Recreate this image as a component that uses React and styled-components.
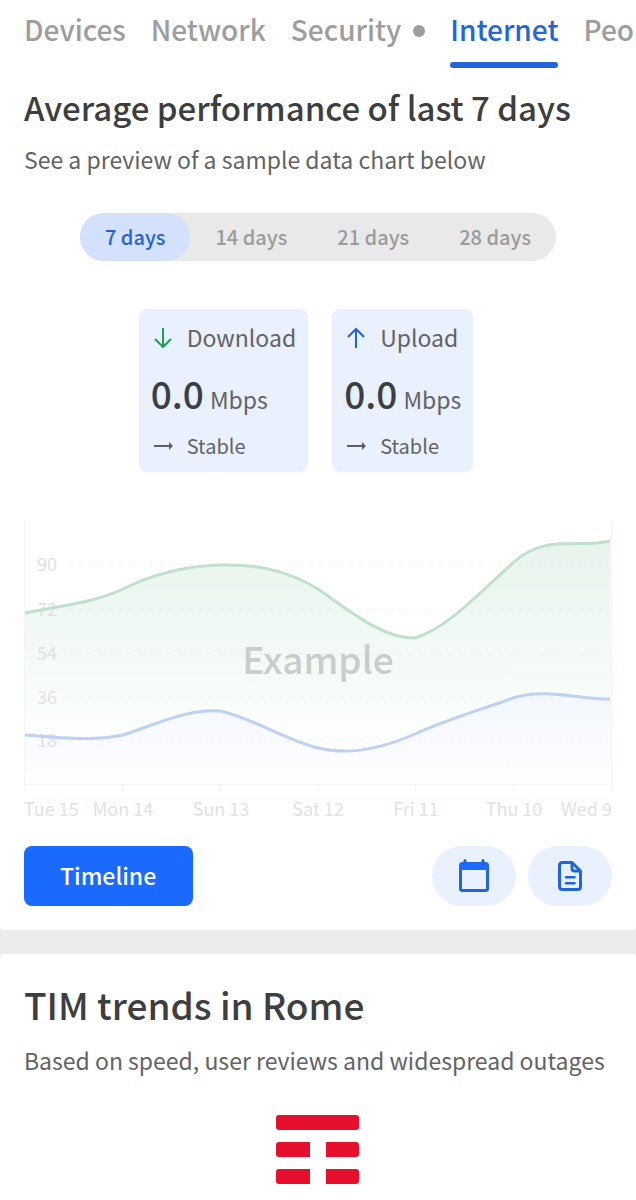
import React, { useState } from 'react';
import styled, { createGlobalStyle } from 'styled-components';

const GlobalStyle = createGlobalStyle`
  * {
    box-sizing: border-box;
  }

  body {
    margin: 0;
    background: #ececec;
    color: #3d3e40;
    font-family: "Noto Sans CJK SC", "Noto Sans", sans-serif;
  }

  button {
    font-family: inherit;
    border: none;
    cursor: pointer;
  }
`;

const Page = styled.div`
  display: flex;
  flex-direction: column;
  gap: 24px;
  overflow: hidden;
`;

const Card = styled.section`
  background: white;
  padding: 0 24px 24px;
  border-radius: ${(p) => (p.$first ? '0 0 4px 4px' : '4px 4px 0 0')};
`;

const Tabs = styled.nav`
  display: flex;
  gap: 25px;
  margin-right: -24px;
  overflow: hidden;
`;

const Tab = styled.a`
  display: flex;
  flex: none;
  flex-direction: column;
  color: ${(p) => (p.$active ? '#2264dc' : '#9d9d9d')};
  font-size: 28px;
  font-weight: 500;
  text-decoration: none;

  &::after {
    content: "";
    height: 6px;
    border-radius: 3px;
    background: ${(p) => (p.$active ? '#2264dc' : 'transparent')};
  }
`;

const TabLabel = styled.span`
  display: flex;
  align-items: center;
  gap: 12px;
  height: 62px;
  padding-bottom: 4px;
`;

const Dot = styled.span`
  width: 12px;
  height: 12px;
  margin-top: 4px;
  border-radius: 50%;
  background: #9d9d9d;
`;

const Title = styled.h2`
  margin: 0;
  padding-top: ${(p) => (p.$large ? '22px' : '15px')};
  font-size: ${(p) => (p.$large ? '37px' : '33px')};
  font-weight: 500;
  line-height: ${(p) => (p.$large ? '56px' : '48px')};
`;

const Subtitle = styled.p`
  margin: 10px 0 0;
  color: #626365;
  font-size: 23px;
  line-height: 36px;
`;

const Segmented = styled.div`
  display: flex;
  width: fit-content;
  margin: 36px auto 0;
  border-radius: 24px;
  background: #e9e9e9;
`;

const Segment = styled.button`
  height: 48px;
  padding: 0 25px 2px;
  border-radius: 24px;
  background: ${(p) => (p.$active ? '#d3e1fd' : 'transparent')};
  color: ${(p) => (p.$active ? '#2264cc' : '#9b9b9b')};
  font-size: 20px;
  font-weight: 500;
`;

const Stats = styled.div`
  display: flex;
  justify-content: center;
  margin: 48px 0;
`;

const Stat = styled.div`
  margin-right: 24px;
  padding: 10px 12px 9px;
  border-radius: 8px;
  background: #e9f1fe;
  color: #626365;
`;

const StatRow = styled.div`
  display: flex;
  align-items: center;
  gap: 12px;
  height: 36px;
  font-size: ${(p) => (p.$small ? '20px' : '23px')};

  svg {
    flex: none;
  }
`;

const StatValue = styled.div`
  display: flex;
  align-items: baseline;
  gap: 6px;
  margin-top: 10px;
  font-size: 23px;
  line-height: 56px;

  strong {
    color: #3d3e40;
    font-size: 37px;
    font-weight: 500;
  }
`;

const Chart = styled.svg`
  display: block;
  width: 100%;
  height: auto;

  text {
    fill: #e1e2e2;
    font-size: 18px;
  }

  .watermark {
    fill: #c9cdcb;
    font-size: 37px;
    font-weight: 500;
  }
`;

const Actions = styled.div`
  display: flex;
  align-items: center;
  gap: 12px;
  margin-top: 16px;
`;

const PrimaryButton = styled.button`
  height: 60px;
  margin-right: auto;
  padding: 0 37px 2px 36px;
  border-radius: 8px;
  background: #1b6aff;
  color: white;
  font-size: 23px;
  font-weight: 500;
`;

const IconButton = styled.button`
  display: flex;
  align-items: center;
  justify-content: center;
  width: 84px;
  height: 60px;
  border-radius: 30px;
  background: #e9f1fe;
`;

const Logo = styled.svg`
  display: block;
  margin: 37px auto 0;
`;

const tabs = ['Devices', 'Network', 'Security', 'Internet', 'People'];
const ranges = ['7 days', '14 days', '21 days', '28 days'];

const gridLines = [
  { label: '90', y: 44 },
  { label: '72', y: 89 },
  { label: '54', y: 133 },
  { label: '36', y: 177 },
  { label: '18', y: 220 },
];

const days = [
  { label: 'Tue 15', x: 0, anchor: 'start' },
  { label: 'Mon 14', x: 99, anchor: 'middle' },
  { label: 'Sun 13', x: 197, anchor: 'middle' },
  { label: 'Sat 12', x: 294, anchor: 'middle' },
  { label: 'Fri 11', x: 392, anchor: 'middle' },
  { label: 'Thu 10', x: 490, anchor: 'middle' },
  { label: 'Wed 9', x: 588, anchor: 'end' },
];

const downloadLine =
  'M1 93C34 86 66 84 99 69C131 53 164 46 196 45C229 44 261 49 294 69C326 91 359 119 391 118C424 108 456 72 489 43C521 13 554 29 586 21';
const uploadLine =
  'M1 215C34 217 66 222 99 215C131 205 164 188 196 191C229 198 261 220 294 228C326 236 359 228 391 214C424 199 456 190 489 178C521 168 554 179 586 179';

const ArrowIcon = ({ up }) => (
  <svg width="24" height="24" viewBox="0 0 24 24" fill="none" stroke={up ? '#2264cc' : '#1fa055'} strokeWidth="2">
    <path d={up ? 'M12 23V4M4 12L12 4L20 12' : 'M12 3V22M4 14L12 22L20 14'} />
  </svg>
);

const StableIcon = () => (
  <svg width="24" height="24" viewBox="0 0 24 24" fill="none" stroke="#5c5d60" strokeWidth="2">
    <path d="M3 13H19" />
    <path d="M18 9L22 13L18 17Z" fill="#5c5d60" stroke="none" />
  </svg>
);

const CalendarIcon = () => (
  <svg width="36" height="36" viewBox="0 0 36 36" fill="none" stroke="#2264dc" strokeWidth="3">
    <rect x="4.5" y="5.5" width="27" height="27" rx="2" />
    <path d="M4 5H32V12H4Z" fill="#1b6aff" stroke="none" />
    <path d="M9 2.5V6M27 2.5V6" strokeLinecap="round" />
  </svg>
);

const DocumentIcon = () => (
  <svg width="36" height="36" viewBox="0 0 36 36" fill="none" stroke="#2264dc" strokeWidth="3" strokeLinecap="round" strokeLinejoin="round">
    <path d="M10.5 4.5H20L28.5 13V28.5Q28.5 31.5 25.5 31.5H10.5Q7.5 31.5 7.5 28.5V7.5Q7.5 4.5 10.5 4.5Z" />
    <path d="M20 5V10.5Q20 13 22.5 13H28" />
    <path d="M14 19.3H22.5M14 25.2H22.5" strokeWidth="2.6" />
  </svg>
);

const StatCard = ({ name, up }) => (
  <Stat>
    <StatRow>
      <ArrowIcon up={up} />
      {name}
    </StatRow>
    <StatValue>
      <strong>0.0</strong>
      Mbps
    </StatValue>
    <StatRow $small>
      <StableIcon />
      Stable
    </StatRow>
  </Stat>
);

const PerformanceChart = () => (
  <Chart viewBox="0 0 588 310" role="img" aria-label="Example performance chart">
    <defs>
      <linearGradient id="download" x1="0" y1="0" x2="0" y2="1">
        <stop offset="0" stopColor="#e7f4ec" />
        <stop offset="0.75" stopColor="#fbfefc" />
        <stop offset="1" stopColor="#ffffff" />
      </linearGradient>
      <linearGradient id="upload" x1="0" y1="0" x2="0" y2="1">
        <stop offset="0" stopColor="#f3f7fd" />
        <stop offset="1" stopColor="#fefeff" />
      </linearGradient>
    </defs>
    <path d={`${downloadLine}V264H1Z`} fill="url(#download)" />
    <path d={`${uploadLine}V264H1Z`} fill="url(#upload)" />
    {gridLines.map((line) => (
      <g key={line.label}>
        <path d={`M45 ${line.y + 0.5}H587`} stroke="#000" strokeOpacity="0.035" strokeDasharray="4 6" />
        <text x="13" y={line.y + 7}>{line.label}</text>
      </g>
    ))}
    <path d="M0.5 0V271M587.5 0V271M0 264.5H588M98.5 265V271M196.5 265V271M294.5 265V271M391.5 265V271M489.5 265V271" stroke="#f3f4f4" fill="none" />
    <path d={downloadLine} fill="none" stroke="#bfe0cc" strokeWidth="3" />
    <path d={uploadLine} fill="none" stroke="#bcd1f3" strokeWidth="3" />
    <text className="watermark" x="294" y="154" textAnchor="middle">Example</text>
    {days.map((day) => (
      <text key={day.label} x={day.x} y="296" textAnchor={day.anchor}>{day.label}</text>
    ))}
  </Chart>
);

const App = () => {
  const [range, setRange] = useState('7 days');

  return (
    <>
      <GlobalStyle />
      <Page>
        <Card $first>
          <Tabs>
            {tabs.map((tab) => (
              <Tab key={tab} href={`#${tab.toLowerCase()}`} $active={tab === 'Internet'}>
                <TabLabel>
                  {tab}
                  {tab === 'Security' && <Dot />}
                </TabLabel>
              </Tab>
            ))}
          </Tabs>
          <Title>Average performance of last 7 days</Title>
          <Subtitle>See a preview of a sample data chart below</Subtitle>
          <Segmented>
            {ranges.map((item) => (
              <Segment key={item} type="button" $active={item === range} onClick={() => setRange(item)}>
                {item}
              </Segment>
            ))}
          </Segmented>
          <Stats>
            <StatCard name="Download" />
            <StatCard name="Upload" up />
          </Stats>
          <PerformanceChart />
          <Actions>
            <PrimaryButton type="button">Timeline</PrimaryButton>
            <IconButton type="button" aria-label="Calendar">
              <CalendarIcon />
            </IconButton>
            <IconButton type="button" aria-label="Report">
              <DocumentIcon />
            </IconButton>
          </Actions>
        </Card>
        <Card>
          <Title $large>TIM trends in Rome</Title>
          <Subtitle>Based on speed, user reviews and widespread outages</Subtitle>
          <Logo width="84" height="70" viewBox="0 0 84 70" fill="#e60f2d" role="img" aria-label="TIM">
            <rect width="83" height="15" rx="3" />
            <path d="M3 27H34V42H3Q0 42 0 39V30Q0 27 3 27ZM50 27H80Q83 27 83 30V39Q83 42 80 42H50Z" />
            <path d="M3 54H34V69H3Q0 69 0 66V57Q0 54 3 54ZM50 54H80Q83 54 83 57V66Q83 69 80 69H50Z" />
          </Logo>
        </Card>
      </Page>
    </>
  );
};

export default App;
